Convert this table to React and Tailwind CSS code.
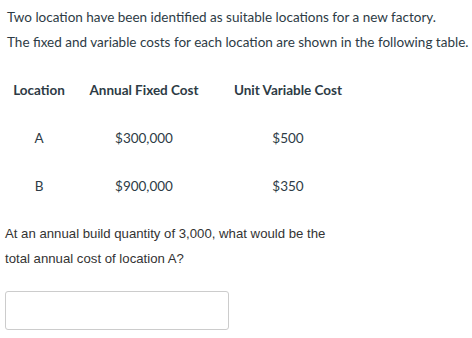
export default function App() {
  const rows = [
    ["A", "$300,000", "$500"],
    ["B", "$900,000", "$350"],
  ];
  return (
    <div className="w-[472px] h-[338px] bg-white overflow-hidden">
      <div className="pl-[7px] pt-[5px] text-[13.5px] leading-[25px] text-[#2d3b45] font-['Lato',sans-serif]">
        <p>Two location have been identified as suitable locations for a new factory.</p>
        <p>The fixed and variable costs for each location are shown in the following table.</p>
      </div>
      <div className="mt-[11px] ml-[7px] font-['Lato',sans-serif] text-[13.5px] text-[#2d3b45]">
        <div className="grid grid-cols-[64px_146px_142px] h-[48px] items-center text-center font-bold">
          <div>Location</div>
          <div>Annual Fixed Cost</div>
          <div>Unit Variable Cost</div>
        </div>
        {rows.map((r) => (
          <div key={r[0]} className="grid grid-cols-[64px_146px_142px] h-[48px] items-center text-center">
            <div>{r[0]}</div>
            <div>{r[1]}</div>
            <div>{r[2]}</div>
          </div>
        ))}
      </div>
      <div className="mt-[11px] pl-[5px] text-[13.2px] leading-[25px] text-[#333] font-['Liberation_Sans',Arial,sans-serif]">
        <p>At an annual build quantity of 3,000, what would be the</p>
        <p>total annual cost of location A?</p>
      </div>
      <div className="mt-[20px] ml-[5px] w-[224px] h-[39px] border border-[#ccc] rounded-[3px] bg-white" />
    </div>
  );
}
